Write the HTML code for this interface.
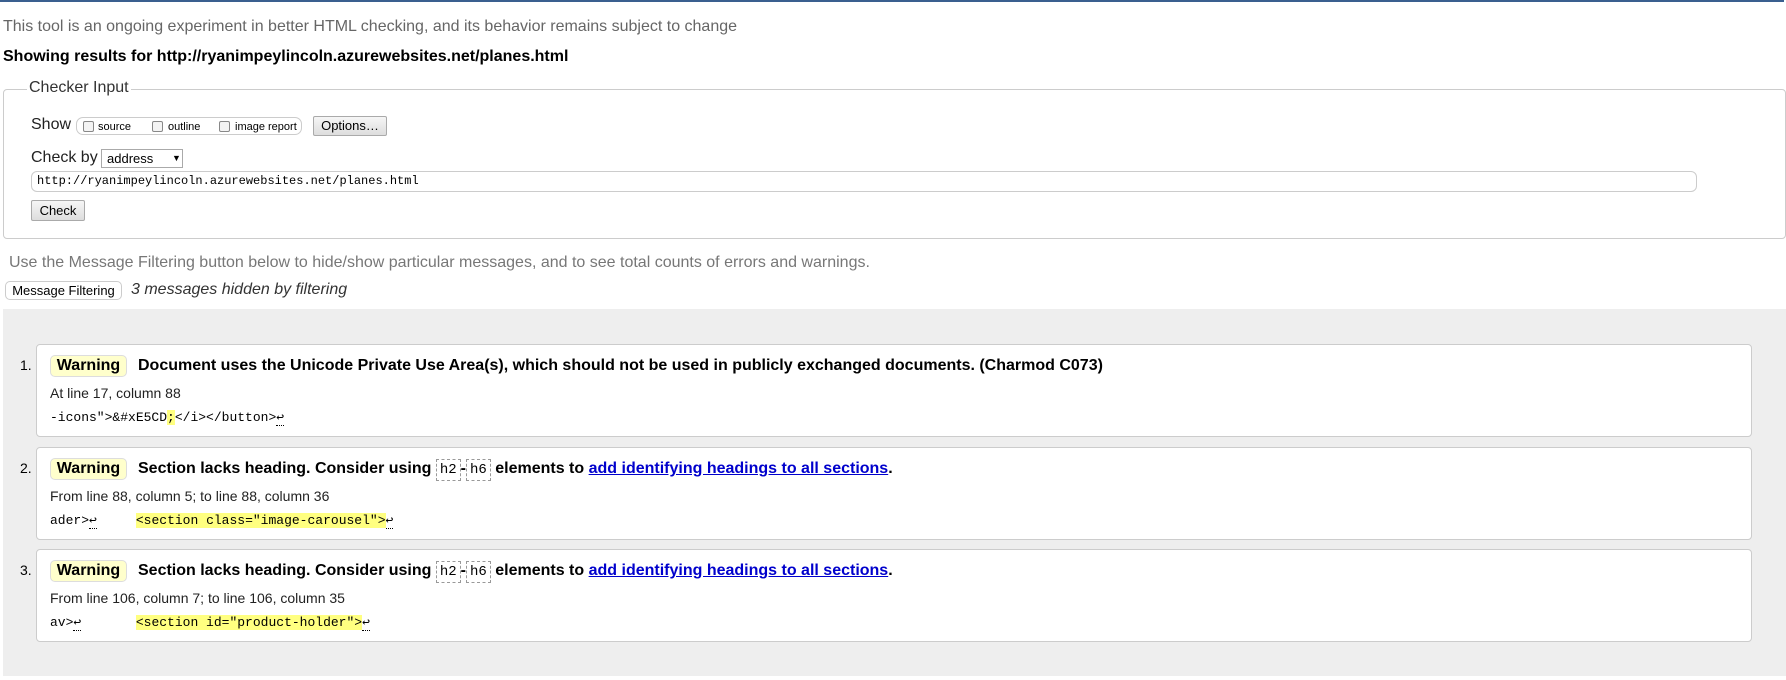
<!DOCTYPE html>
<html><head><meta charset="utf-8"><style>
*{margin:0;padding:0;box-sizing:border-box}
body{width:1786px;height:680px;position:relative;background:#fff;font-family:"Liberation Sans",Arial,sans-serif;color:#000;overflow:hidden}
.a{position:absolute;white-space:nowrap}
.mono{font-family:"Liberation Mono",monospace}
.box{position:absolute;left:36px;width:1716px;height:93px;background:#fff;border:1px solid #ccc;border-radius:4px}
.warn{position:absolute;left:13px;top:10px;width:77px;height:22px;background:#ffffcc;border:1px solid #ddd;border-radius:5px;font-weight:bold;font-size:16px;line-height:20px;text-align:center}
.t{position:absolute;left:101px;top:10px;font-weight:bold;font-size:16px;line-height:22px;white-space:nowrap}
.l{position:absolute;left:13px;top:39px;font-size:14px;line-height:18px;white-space:nowrap;color:#222}
.c{position:absolute;left:13px;top:64px;font-size:13px;line-height:18px;white-space:pre;font-family:"Liberation Mono",monospace}
.num{position:absolute;left:20px;font-size:14px;line-height:20px}
.hl{background:#ffff80}
.el{display:inline-block;border:1px dashed #999;padding:0 3px;font-family:"Liberation Mono",monospace;font-weight:normal;font-size:14px;line-height:20px}
.lk{color:#00c;text-decoration:underline}
.ret{border-bottom:1px dotted #000}
.cb{position:absolute;top:3px;width:11px;height:11px;border:1px solid #888;border-radius:2px;background:#f4f4f4}
</style></head><body>
<div class="a" style="left:0;top:0;width:1784px;height:2px;background:#3a5f8f"></div>
<div class="a" style="left:3px;top:18px;font-size:16px;line-height:18px;color:#666">This tool is an ongoing experiment in better HTML checking, and its behavior remains subject to change</div>
<div class="a" style="left:3px;top:48px;font-size:16px;line-height:18px;font-weight:bold">Showing results for http://ryanimpeylincoln.azurewebsites.net/planes.html</div>

<div class="a" style="left:3px;top:89px;width:1783px;height:150px;border:1px solid #ccc;border-radius:4px"></div>
<div class="a" style="left:27px;top:79px;padding:0 2px;background:#fff;font-size:16px;line-height:18px;color:#333">Checker Input</div>
<div class="a" style="left:31px;top:116px;font-size:16px;line-height:18px;color:#222">Show</div>
<div class="a" style="left:76px;top:117px;width:226px;height:18px;border:1px solid #ccc;border-radius:7px">
 <div class="cb" style="left:6px"></div><div class="a" style="left:21px;top:3px;font-size:11px;line-height:12px">source</div>
 <div class="cb" style="left:75px"></div><div class="a" style="left:91px;top:3px;font-size:11px;line-height:12px">outline</div>
 <div class="cb" style="left:142px"></div><div class="a" style="left:158px;top:3px;font-size:11px;line-height:12px">image report</div>
</div>
<div class="a" style="left:313px;top:116px;width:74px;height:20px;border:1px solid #aaa;border-radius:2px;background:linear-gradient(#f6f6f6,#ddd);font-size:13px;line-height:18px;text-align:center">Options…</div>
<div class="a" style="left:31px;top:149px;font-size:16px;line-height:18px;color:#222">Check by</div>
<div class="a" style="left:101px;top:149px;width:82px;height:19px;border:1px solid #aaa;background:#fff;font-size:13px;line-height:17px;padding-left:5px">address<span style="position:absolute;left:70px;top:0;font-size:9px">▼</span></div>
<div class="a" style="left:31px;top:171px;width:1666px;height:21px;border:1px solid #ccc;border-radius:6px"></div>
<div class="a mono" style="left:37px;top:174px;font-size:12px;line-height:15px">http://ryanimpeylincoln.azurewebsites.net/planes.html</div>
<div class="a" style="left:31px;top:200px;width:54px;height:21px;border:1px solid #aaa;border-radius:2px;background:linear-gradient(#f6f6f6,#ddd);font-size:13px;line-height:19px;text-align:center">Check</div>

<div class="a" style="left:9px;top:254px;font-size:16px;line-height:18px;color:#777">Use the Message Filtering button below to hide/show particular messages, and to see total counts of errors and warnings.</div>
<div class="a" style="left:5px;top:281px;width:117px;height:19px;border:1px solid #ccc;border-radius:5px;font-size:13px;line-height:17px;text-align:center">Message Filtering</div>
<div class="a" style="left:131px;top:281px;font-size:16px;line-height:18px;font-style:italic;color:#333">3 messages hidden by filtering</div>

<div class="a" style="left:3px;top:309px;width:1783px;height:367px;background:#eee"></div>

<div class="num a" style="top:355px">1.</div>
<div class="box" style="top:344px">
 <div class="warn">Warning</div>
 <div class="t">Document uses the Unicode Private Use Area(s), which should not be used in publicly exchanged documents. (Charmod C073)</div>
 <div class="l">At line 17, column 88</div>
 <div class="c">-icons"&gt;&amp;#xE5CD<span class="hl">;</span>&lt;/i&gt;&lt;/button&gt;<span class="ret">↩</span></div>
</div>

<div class="num a" style="top:458px">2.</div>
<div class="box" style="top:447px">
 <div class="warn">Warning</div>
 <div class="t">Section lacks heading. Consider using <span class="el">h2</span>-<span class="el">h6</span> elements to <span class="lk">add identifying headings to all sections</span>.</div>
 <div class="l">From line 88, column 5; to line 88, column 36</div>
 <div class="c">ader&gt;<span class="ret">↩</span>     <span class="hl">&lt;section class="image-carousel"&gt;</span><span class="ret">↩</span></div>
</div>

<div class="num a" style="top:560px">3.</div>
<div class="box" style="top:549px">
 <div class="warn">Warning</div>
 <div class="t">Section lacks heading. Consider using <span class="el">h2</span>-<span class="el">h6</span> elements to <span class="lk">add identifying headings to all sections</span>.</div>
 <div class="l">From line 106, column 7; to line 106, column 35</div>
 <div class="c">av&gt;<span class="ret">↩</span>       <span class="hl">&lt;section id="product-holder"&gt;</span><span class="ret">↩</span></div>
</div>
</body></html>
